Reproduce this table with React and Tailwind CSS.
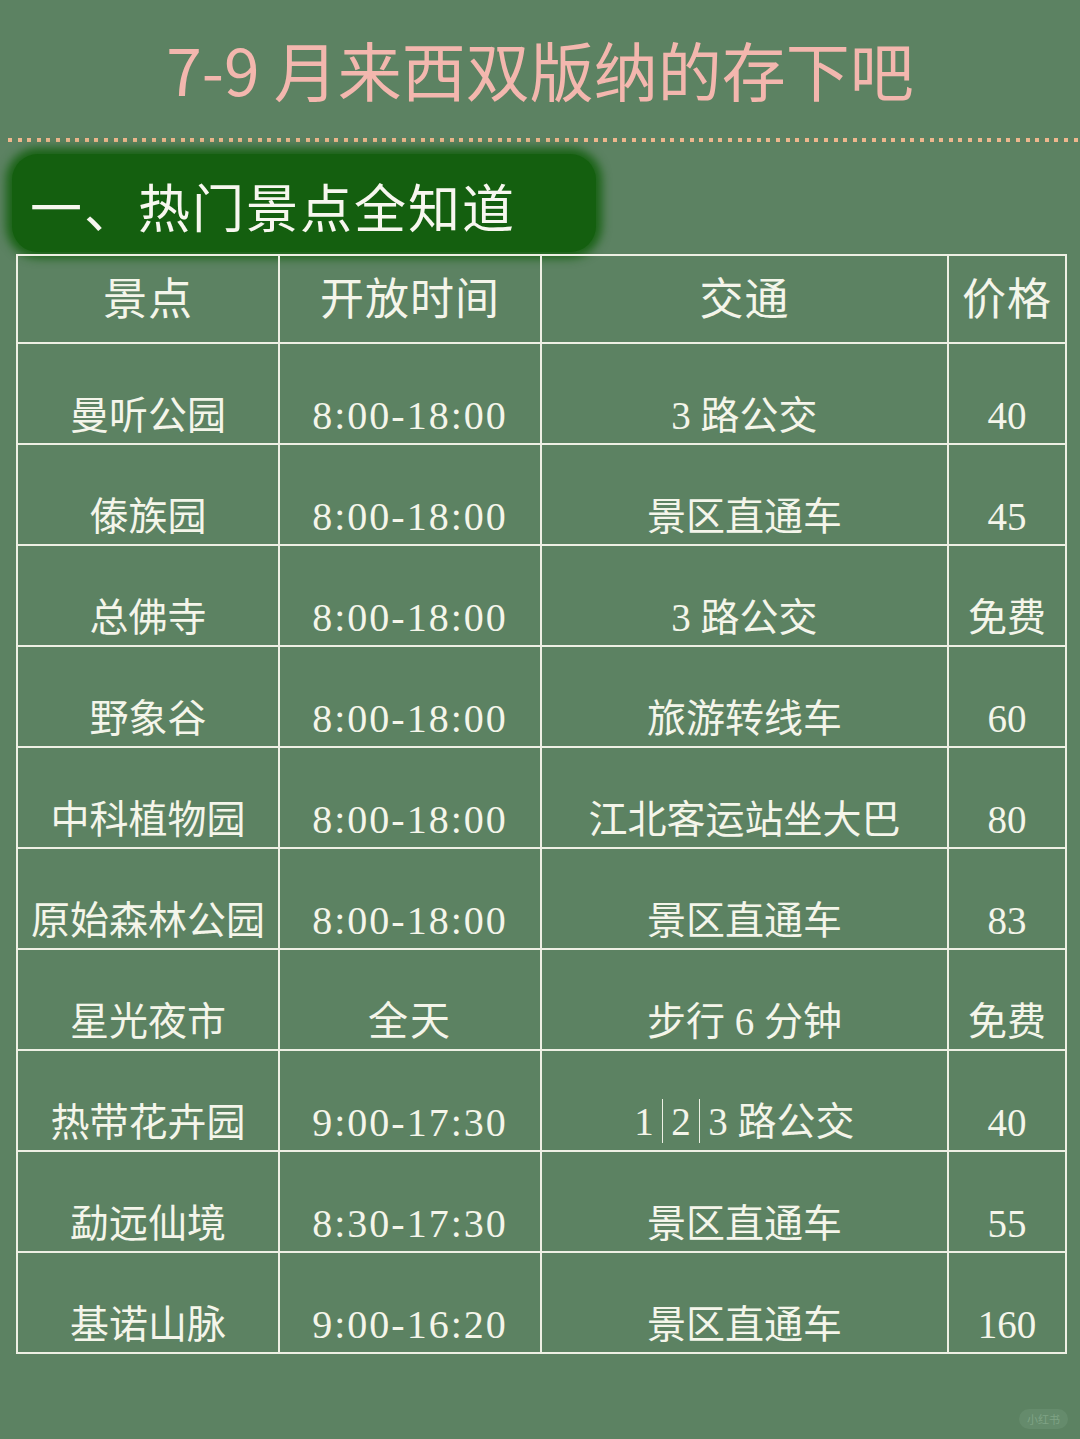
const rows = [
  ['曼听公园', '8:00-18:00', '3 路公交', '40'],
  ['傣族园', '8:00-18:00', '景区直通车', '45'],
  ['总佛寺', '8:00-18:00', '3 路公交', '免费'],
  ['野象谷', '8:00-18:00', '旅游转线车', '60'],
  ['中科植物园', '8:00-18:00', '江北客运站坐大巴', '80'],
  ['原始森林公园', '8:00-18:00', '景区直通车', '83'],
  ['星光夜市', '全天', '步行 6 分钟', '免费'],
  ['热带花卉园', '9:00-17:30', 'bus123', '40'],
  ['勐远仙境', '8:30-17:30', '景区直通车', '55'],
  ['基诺山脉', '9:00-16:20', '景区直通车', '160'],
];

const Bar = () => <span className="inline-block w-[1.5px] h-[44px] bg-[#eef0e4] mx-[8px] align-[-8px]" />;

const cellText = (t) =>
  t === 'bus123' ? (
    <span>
      1<Bar />2<Bar />3 路公交
    </span>
  ) : (
    t
  );

export default function App() {
  return (
    <div
      className="w-[1080px] h-[1439px] bg-[#5c8262] relative overflow-hidden"
      style={{ fontFamily: '"Liberation Serif", "Noto Sans CJK SC", serif' }}
    >
      <h1
        className="pt-[33px] h-[70px] box-content text-center text-[64px] leading-[70px] text-[#f3b7ae]"
        style={{ fontFamily: '"Noto Sans CJK SC", sans-serif' }}
      >
        7-9 月来西双版纳的存下吧
      </h1>
      <div className="mt-[35px] ml-[8px] h-[4px] bg-[repeating-linear-gradient(90deg,#efb78e_0_4px,transparent_4px_9.6px)]" />
      <div className="mt-[12px] ml-[12px] w-[584px] h-[98px] rounded-[26px] bg-[#145f0f] shadow-[0_0_10px_6px_#1a6316] flex items-center pl-[18px]">
        <span
          className="text-[52px] text-[#f7f7ef] font-normal tracking-[2px] pt-[6px]"
          style={{ fontFamily: '"Noto Sans CJK SC", sans-serif' }}
        >
          一、热门景点全知道
        </span>
      </div>
      <table className="relative mt-[2px] ml-[16px] w-[1049px] table-fixed border-collapse text-[#f4f5ea]">
        <colgroup>
          <col className="w-[262px]" />
          <col className="w-[262px]" />
          <col className="w-[407px]" />
          <col className="w-[118px]" />
        </colgroup>
        <thead>
          <tr className="h-[88px]">
            {['景点', '开放时间', '交通', '价格'].map((h) => (
              <th key={h} className="border-2 border-[#eef0e4] font-normal text-[44px] leading-[48px] align-middle p-0 pt-[4px] tracking-[1px]">
                {h}
              </th>
            ))}
          </tr>
        </thead>
        <tbody>
          {rows.map((r) => (
            <tr key={r[0]} className="h-[101px]">
              {r.map((c, i) => (
                <td
                  key={i}
                  className={
                    'border-2 border-[#eef0e4] text-center align-bottom pb-[7px] px-0 leading-[40px] whitespace-nowrap ' +
                    (i === 1 ? 'text-[40px] tracking-[2px]' : 'text-[39px]')
                  }
                >
                  {cellText(c)}
                </td>
              ))}
            </tr>
          ))}
        </tbody>
      </table>
      <div
        className="absolute right-[12px] bottom-[10px] px-[8px] h-[20px] rounded-full bg-[#6a8f70]/70 text-[11px] leading-[20px] text-[#7fa385]"
        style={{ fontFamily: '"Noto Sans CJK SC", sans-serif' }}
      >
        小红书
      </div>
    </div>
  );
}
